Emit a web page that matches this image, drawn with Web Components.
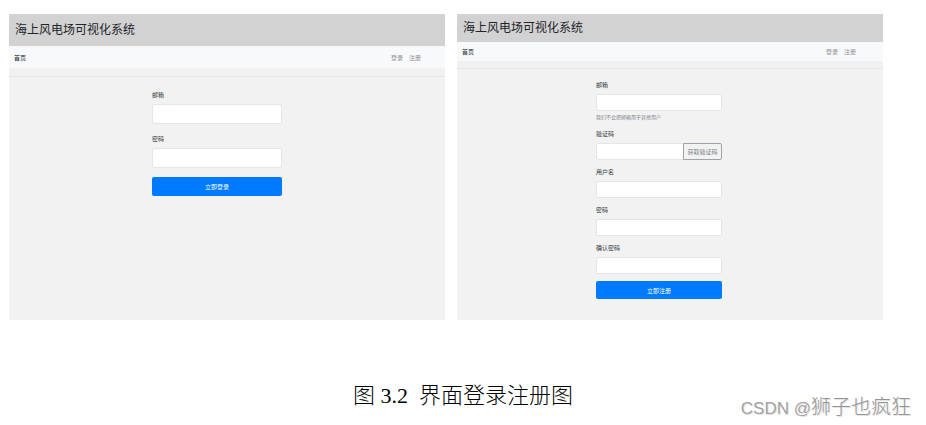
<!DOCTYPE html>
<html lang="zh-CN">
<head>
<meta charset="utf-8">
<meta name="viewport" content="width=device-width, initial-scale=1">
<title>海上风电场可视化系统</title>
<style>
body { margin: 0; background: #fff; font-family: "Liberation Sans", "Noto Sans CJK SC", sans-serif; color: #212529; }
</style>
</head>
<body>
<figure-page></figure-page>
<script>
function define(name, html, setup) {
  const template = document.createElement('template');
  template.innerHTML = '<style>*{box-sizing:border-box}</style>' + html;
  customElements.define(name, class extends HTMLElement {
    constructor() {
      super();
      this.attachShadow({ mode: 'open' }).append(template.content.cloneNode(true));
    }
    connectedCallback() { if (setup) setup(this, this.shadowRoot); }
  });
}

define('form-field', `
<style>
:host { display: flex; flex-direction: column; gap: var(--label-gap); font-size: 6px; }
label { height: var(--label-height); line-height: var(--label-height); color: #33383d; }
.row { display: flex; height: var(--control-height); }
input { flex: 1; min-width: 0; border: 1px solid #e3e5e8; border-radius: 2px; padding: 0 4px; background: #fff; font: inherit; outline-offset: 0; }
::slotted(small) { display: block; margin-top: -2px; font-size: 5px; line-height: 9px; color: #7d858c; white-space: nowrap; }
</style>
<label for="control"></label>
<div class="row"><input id="control"><slot name="action"></slot></div>
<slot name="help"></slot>`, (host, root) => {
  root.querySelector('label').textContent = host.getAttribute('label');
  root.querySelector('input').type = host.getAttribute('type') || 'text';
});

define('submit-button', `
<style>
:host { display: block; }
button { display: block; width: 100%; height: var(--button-height); padding: 0; border: 0; border-radius: 2px; background: #007bff; color: #fff; font: inherit; font-size: 6px; }
</style>
<button type="button"><slot></slot></button>`);

define('code-button', `
<style>
:host { display: flex; flex: 0 0 31%; margin-left: -1px; }
button { width: 100%; padding: 0; border: 1px solid #9da3a9; border-radius: 0 2px 2px 0; background: #f2f2f2; color: #7d858c; font: inherit; font-size: 6px; white-space: nowrap; }
</style>
<button type="button"><slot></slot></button>`);

define('site-header', `
<style>
:host { display: block; }
h1 { margin: 0; padding-left: 6px; height: var(--header-height); line-height: var(--header-height); background: #d2d2d2; color: #212529; font-size: 12px; font-weight: 400; }
nav { display: flex; align-items: center; height: var(--nav-height); padding: 0 var(--nav-end) 0 5px; background: #f8f9fb; font-size: 6px; }
.links { display: flex; gap: 6px; margin-left: auto; }
a { color: #8d8f91; text-decoration: none; }
a.home { color: #212529; }
.rule { height: var(--rule-height); border-bottom: 1px solid #e4e5e6; background: #f1f1f2; }
</style>
<h1>海上风电场可视化系统</h1>
<nav><a class="home" href="#home">首页</a><span class="links"><a href="#login">登录</a><a href="#register">注册</a></span></nav>
<div class="rule"></div>`);

define('site-panel', `
<style>
:host { display: flex; flex-direction: column; min-width: 0; background: #f2f2f2; }
.body { display: grid; grid-template-columns: var(--form-columns); padding: var(--body-top) 0 21px; }
form { grid-column: 2; display: flex; flex-direction: column; gap: var(--field-gap); min-width: 0; }
</style>
<site-header></site-header>
<div class="body"><form><slot></slot></form></div>`);

define('figure-page', `
<style>
:host { display: flex; flex-direction: column; position: relative; min-height: 100vh; padding: 14px 43px 16px 9px; box-sizing: border-box; }
.screens { display: grid; grid-template-columns: 436fr 426fr; gap: 12px; }
.login {
  --header-height: 32px; --nav-height: 22px; --nav-end: 24px; --rule-height: 9px; --body-top: 12px;
  --form-columns: 143fr 130fr 163fr; --field-gap: 9px;
  --label-height: 12px; --label-gap: 3px; --control-height: 20px; --button-height: 19px;
}
.register {
  --header-height: 28px; --nav-height: 19px; --nav-end: 27px; --rule-height: 8px; --body-top: 11px;
  --form-columns: 139fr 126fr 161fr; --field-gap: 7px;
  --label-height: 10px; --label-gap: 4px; --control-height: 17px; --button-height: 18px;
}
p { margin: 61px 0 0 34px; text-align: center; font: 300 22px/30px "Liberation Serif", "Noto Sans CJK SC", serif; color: #000; white-space: pre-wrap; }
.watermark { position: absolute; right: 15px; bottom: 4px; font-size: 20px; font-weight: 300; line-height: 28px; color: #949494; text-shadow: 1px 1px 0 #e4e4e4; }
.latin { font-size: 17px; color: #a2a2a2; }
</style>
<main class="screens">
  <site-panel class="login">
    <form-field label="邮箱" type="email"></form-field>
    <form-field label="密码" type="password"></form-field>
    <submit-button>立即登录</submit-button>
  </site-panel>
  <site-panel class="register">
    <form-field label="邮箱" type="email"><small slot="help">我们不会把邮箱用于其他用户</small></form-field>
    <form-field label="验证码"><code-button slot="action">获取验证码</code-button></form-field>
    <form-field label="用户名"></form-field>
    <form-field label="密码" type="password"></form-field>
    <form-field label="确认密码" type="password"></form-field>
    <submit-button>立即注册</submit-button>
  </site-panel>
</main>
<p>图 3.2  界面登录注册图</p>
<div class="watermark"><span class="latin">CSDN @</span>狮子也疯狂</div>`);
</script>
</body>
</html>
